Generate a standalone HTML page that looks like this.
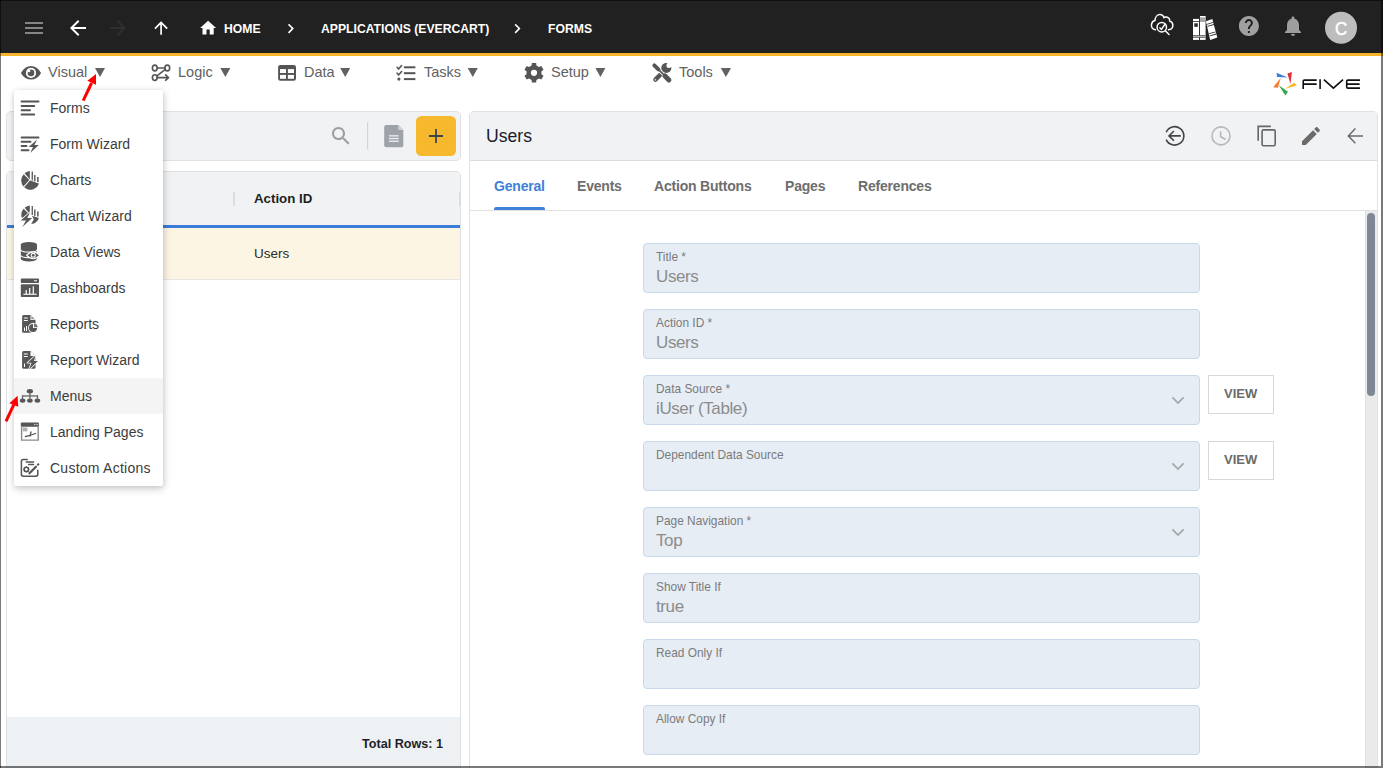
<!DOCTYPE html>
<html><head><meta charset="utf-8">
<style>
*{box-sizing:border-box;margin:0;padding:0}
html,body{width:1383px;height:768px;overflow:hidden;background:#fff;font-family:"Liberation Sans",sans-serif}
.a{position:absolute}
.t{position:absolute;white-space:nowrap;line-height:1}
svg{position:absolute;overflow:visible}
#top{left:0;top:0;width:1383px;height:53px;background:#212121}
#yl{left:0;top:53px;width:1383px;height:3px;background:#f6b42a}
.bc{color:#fff;font-weight:700;font-size:12.2px}
.nav{color:#616161;font-size:14.5px}
.tri{color:#616161;font-size:11px}
.panel{border:1px solid #dfe1e5;border-radius:5px;background:#fff}
.hdr{background:#f1f2f4}
.mi{color:#3c3c3c;font-size:14px}
.tab{font-weight:700;font-size:14px;letter-spacing:-0.2px;color:#6e6e6e}
.fld{position:absolute;left:643px;width:557px;height:50px;background:#e6edf5;border:1px solid #c8d8ea;border-radius:4px}
.lbl{position:absolute;left:12px;top:7.5px;font-size:11.9px;color:#7b7b7b;white-space:nowrap;line-height:1}
.val{position:absolute;left:12px;top:24px;font-size:17px;letter-spacing:-0.4px;color:#8c8c8c;white-space:nowrap;line-height:1}
.btn{position:absolute;left:1208px;width:66px;height:39px;border:1px solid #d8d8d8;background:#fff}
.btn span{position:absolute;left:15px;top:10.5px;font-size:13px;font-weight:700;color:#6b6b6b;line-height:1}
</style></head><body>
<!-- top bar -->
<div id="top" class="a"></div>
<div id="yl" class="a"></div>
<div class="t bc" style="left:224px;top:23px">HOME</div>
<div class="t bc" style="left:321px;top:23px">APPLICATIONS (EVERCART)</div>
<div class="t bc" style="left:548px;top:23px">FORMS</div>

<!-- nav -->
<div class="t nav" style="left:48px;top:65px">Visual</div>
<div class="t nav" style="left:178px;top:65px">Logic</div>
<div class="t nav" style="left:304px;top:65px">Data</div>
<div class="t nav" style="left:424px;top:65px">Tasks</div>
<div class="t nav" style="left:551px;top:65px">Setup</div>
<div class="t nav" style="left:679px;top:65px">Tools</div>

<!-- left toolbar panel -->
<div class="a panel hdr" style="left:6px;top:111px;width:455px;height:50px"></div>
<!-- table panel -->
<div class="a panel" style="left:6px;top:171px;width:455px;height:610px;overflow:hidden">
  <div class="a hdr" style="left:0;top:0;width:455px;height:53px"></div>
  <div class="a" style="left:0;top:53px;width:455px;height:3px;background:#3b7dd8"></div>
  <div class="a" style="left:0;top:56px;width:455px;height:52px;background:#fdf5e4;border-bottom:1px solid #e6e6e6"></div>
  <div class="a" style="left:0;top:545px;width:455px;height:60px;background:#eef1f3"></div>
</div>
<div class="a" style="left:233px;top:192px;width:2px;height:14px;background:#dadcdf"></div>
<div class="a" style="left:458.5px;top:192px;width:2px;height:14px;background:#dadcdf"></div>
<div class="t" style="left:254px;top:191.5px;font-size:13.3px;font-weight:700;color:#1e1e1e">Action ID</div>
<div class="t" style="left:254px;top:246.5px;font-size:13.5px;color:#2a2a2a">Users</div>
<div class="t" style="left:362px;top:737.5px;font-size:12.6px;font-weight:700;color:#1e1e2a">Total Rows: 1</div>

<!-- right panel -->
<div class="a panel" style="left:469px;top:111px;width:909px;height:680px;overflow:hidden">
  <div class="a hdr" style="left:0;top:0;width:909px;height:49px;border-bottom:1px solid #dcdcdc"></div>
  <div class="a" style="left:0;top:49px;width:909px;height:50px;border-bottom:1px solid #e0e0e0"></div>
</div>
<div class="t" style="left:486px;top:127.5px;font-size:17.6px;color:#1a1d2b">Users</div>
<div class="t tab" style="left:494px;top:178.5px;color:#3f80d8">General</div>
<div class="a" style="left:494px;top:207px;width:51px;height:3px;background:#3f80d8;border-radius:2px 2px 0 0"></div>
<div class="t tab" style="left:577px;top:178.5px">Events</div>
<div class="t tab" style="left:654px;top:178.5px">Action Buttons</div>
<div class="t tab" style="left:785px;top:178.5px">Pages</div>
<div class="t tab" style="left:858px;top:178.5px">References</div>

<!-- fields -->
<div class="fld" style="top:243px"><div class="lbl">Title *</div><div class="val">Users</div></div>
<div class="fld" style="top:309px"><div class="lbl">Action ID *</div><div class="val">Users</div></div>
<div class="fld" style="top:375px"><div class="lbl">Data Source *</div><div class="val">iUser (Table)</div></div>
<div class="fld" style="top:441px"><div class="lbl">Dependent Data Source</div></div>
<div class="fld" style="top:507px"><div class="lbl">Page Navigation *</div><div class="val">Top</div></div>
<div class="fld" style="top:573px"><div class="lbl">Show Title If</div><div class="val">true</div></div>
<div class="fld" style="top:639px"><div class="lbl">Read Only If</div></div>
<div class="fld" style="top:705px"><div class="lbl">Allow Copy If</div></div>
<div class="btn" style="top:375px"><span>VIEW</span></div>
<div class="btn" style="top:441px"><span>VIEW</span></div>

<!-- scrollbar -->
<div class="a" style="left:1365px;top:211px;width:12px;height:560px;background:#eaeaea;border-left:1px solid #e0e0e0"></div>
<div class="a" style="left:1367px;top:213px;width:8px;height:183px;background:#7f8696;border-radius:4px"></div>

<svg class="a" style="left:0;top:0" width="1383" height="768" viewBox="0 0 1383 768">
<!-- FIVE logo -->
<path d="M1276.6 72.8 L1277 77 L1287.8 77.4Z" fill="#3d7fdc"/>
<path d="M1287.4 73.6 L1291.9 72 L1290.5 83.9Z" fill="#e0333a"/>
<path d="M1285.2 88.7 L1294 82.8 L1297 85.4Z" fill="#f6b929"/>
<path d="M1278.8 85.2 L1288 91.7 L1285.3 95.4Z" fill="#34a853"/>
<path d="M1280.7 77.9 L1273.2 87.3 L1277.9 87.8Z" fill="#f97c2c"/>
<g fill="none" stroke="#111" stroke-width="1.6">
<path d="M1303.2 88.9 V81.3 Q1303.2 80.1 1304.4 80.1 H1316.7 M1303.2 84.1 H1316.7"/>
<path d="M1320.1 79.3 V88.9"/>
<path d="M1323.9 79.6 L1333.4 88.2 L1343 79.6"/>
<path d="M1360 80.1 H1348 Q1346.7 80.1 1346.7 81.3 V86.9 Q1346.7 88.1 1348 88.1 H1360 M1346.7 84.1 H1359.6"/>
</g>
<!-- toolbar -->
<g transform="translate(329,124)" fill="#9a9da2"><path d="M15.5 14h-.79l-.28-.27C15.41 12.59 16 11.11 16 9.5 16 5.91 13.09 3 9.5 3S3 5.91 3 9.5 5.91 16 9.5 16c1.61 0 3.09-.59 4.23-1.57l.27.28v.79l5 4.99L20.49 19l-4.99-5zm-6 0C7.01 14 5 11.99 5 9.5S7.01 5 9.5 5 14 7.01 14 9.5 11.99 14 9.5 14z"/></g>
<rect x="367" y="122" width="1.2" height="27.5" fill="#d3d5d8"/>
<path d="M386.2 124.9 H398.5 L403.3 129.7 V145.2 Q403.3 147.2 401.3 147.2 H386.2 Q384.2 147.2 384.2 145.2 V126.9 Q384.2 124.9 386.2 124.9Z" fill="#9ea3aa"/>
<path d="M398.5 124.9 V129.7 H403.3Z" fill="#f1f2f4"/>
<path d="M398.8 125.3 L398.8 129.4 L402.9 129.4Z" fill="#c9ccd0"/>
<g fill="#eef0f2"><rect x="388.9" y="135.2" width="9.8" height="1.3"/><rect x="388.9" y="137.9" width="9.8" height="1.3"/><rect x="388.9" y="140.6" width="9.8" height="1.3"/></g>
<rect x="416" y="116" width="40" height="40" rx="5.5" fill="#f6b82c"/>
<path d="M436 129 V143 M429 136 H443" stroke="#3e4452" stroke-width="1.8"/>
<!-- right header icons -->
<g fill="none" stroke="#444" stroke-width="1.6">
<path d="M1166.2 132.2 A9.2 9.2 0 1 1 1166.2 139.6"/>
<path d="M1180.8 135.9 H1169 M1173.9 131 L1169 135.9 L1173.9 140.8"/>
</g>
<g fill="none" stroke="#b8b8b8" stroke-width="1.6">
<circle cx="1221" cy="135.9" r="9"/>
<path d="M1220.6 131.2 V136.5 L1225.6 139.5"/>
</g>
<g fill="none" stroke="#666" stroke-width="1.6">
<path d="M1258.2 140.8 V126.4 H1270.8"/>
<rect x="1262.1" y="129.9" width="13.1" height="15.8" rx="1.4"/>
</g>
<g transform="translate(1299,124)" fill="#6b6b6b"><path d="M3 17.25V21h3.75L17.81 9.94l-3.75-3.75L3 17.25zM20.71 7.04c.39-.39.39-1.02 0-1.41l-2.34-2.34c-.39-.39-1.02-.39-1.41 0l-1.83 1.83 3.75 3.75 1.83-1.83z"/></g>
<g fill="none" stroke="#6b6b6b" stroke-width="1.5">
<path d="M1363 135.9 H1348.5 M1355.4 128.6 L1348.3 135.9 L1355.4 143.2"/>
</g>
<!-- select chevrons -->
<g fill="none" stroke="#a6a6a6" stroke-width="1.7">
<path d="M1172.4 397.3 L1178 403 L1183.6 397.3"/>
<path d="M1172.4 463.3 L1178 469 L1183.6 463.3"/>
<path d="M1172.4 529.3 L1178 535 L1183.6 529.3"/>
</g>
</svg>

<!-- dropdown menu -->
<div class="a" style="left:14px;top:90px;width:149px;height:396px;background:#fff;border-radius:2px;box-shadow:0 4px 8px rgba(0,0,0,.11),0 1px 4px rgba(0,0,0,.1),2px 1px 9px rgba(0,0,0,.08)">
  <div class="a" style="left:0;top:288px;width:149px;height:36px;background:#f4f4f4"></div>
</div>
<div class="t mi" style="left:50px;top:101px">Forms</div>
<div class="t mi" style="left:50px;top:137px">Form Wizard</div>
<div class="t mi" style="left:50px;top:173px">Charts</div>
<div class="t mi" style="left:50px;top:209px">Chart Wizard</div>
<div class="t mi" style="left:50px;top:245px">Data Views</div>
<div class="t mi" style="left:50px;top:281px">Dashboards</div>
<div class="t mi" style="left:50px;top:317px">Reports</div>
<div class="t mi" style="left:50px;top:353px">Report Wizard</div>
<div class="t mi" style="left:50px;top:389px">Menus</div>
<div class="t mi" style="left:50px;top:425px">Landing Pages</div>
<div class="t mi" style="left:50px;top:461px;letter-spacing:.25px">Custom Actions</div>

<svg class="a" style="left:0;top:0" width="1383" height="768" viewBox="0 0 1383 768">
<!-- hamburger -->
<g transform="translate(22,16)" fill="#868686"><path d="M3 18h18v-2H3v2zm0-5h18v-2H3v2zm0-7v2h18V6H3z"/></g>
<!-- back -->
<g transform="translate(66,16)" fill="#fff"><path d="M20 11H7.83l5.59-5.59L12 4l-8 8 8 8 1.41-1.41L7.83 13H20v-2z"/></g>
<!-- forward (disabled) -->
<g transform="translate(106,16)" fill="#2f2f2f"><path d="M12 4l-1.41 1.41L16.17 11H4v2h12.17l-5.58 5.59L12 20l8-8z"/></g>
<!-- up -->
<g transform="translate(151,18) scale(0.84)" fill="#fff"><path d="M4 12l1.41 1.41L11 7.83V20h2V7.83l5.58 5.59L20 12l-8-8-8 8z"/></g>
<!-- home -->
<g transform="translate(198.5,18.4) scale(0.8)" fill="#fff"><path d="M10 20v-6h4v6h5v-8h3L12 3 2 12h3v8z"/></g>
<!-- chevrons -->
<g transform="translate(281.1,19) scale(0.8)" fill="#fff"><path d="M10 6L8.59 7.41 13.17 12l-4.58 4.59L10 18l6-6z"/></g>
<g transform="translate(507.7,19) scale(0.8)" fill="#fff"><path d="M10 6L8.59 7.41 13.17 12l-4.58 4.59L10 18l6-6z"/></g>
<!-- cloud search -->
<g fill="none" stroke="#fff" stroke-width="1.5" stroke-linecap="round">
<path d="M1155.4 29.8 C1152.3 29.4 1151 27 1151.5 24.3 C1151.9 22 1153.5 20.6 1155 20.4 C1155.2 16.8 1157.4 14.6 1159.9 14.6 C1161.9 14.6 1163.4 15.8 1164 17.6 C1164.8 17 1165.8 16.8 1166.6 17 C1168.8 17.5 1169.8 19.2 1169.7 21 C1171.8 21.8 1173 23.8 1172.8 26 C1172.5 28.3 1170.6 29.6 1168.4 29.8"/>
<circle cx="1161.8" cy="27.2" r="4.7"/>
<path d="M1160 27.9 L1161.4 29.4 L1164.6 24.8"/>
<path d="M1165.3 30.8 L1169 34.5"/>
</g>
<!-- books -->
<g fill="#fff">
<rect x="1193" y="18.9" width="6.2" height="21"/>
<rect x="1200" y="16" width="5.6" height="23.9"/>
<path d="M1205.9 21.2 L1212.3 19.1 L1217.3 37.5 L1210.2 39.9Z"/>
</g>
<g fill="#2a2a2a">
<rect x="1193" y="21.2" width="6.2" height="0.8"/>
<rect x="1194.3" y="23.3" width="3.5" height="3.5"/>
<rect x="1193" y="35.1" width="12.6" height="0.7"/>
<rect x="1193" y="37.3" width="12.6" height="0.7"/>
<rect x="1199.2" y="16" width="0.8" height="24"/>
<rect x="1200" y="20.6" width="5.6" height="0.8"/>
<path d="M1206.7 23.9 L1213.2 22 L1213.4 22.8 L1206.9 24.7Z"/>
<path d="M1207.3 26 L1213.8 24.1 L1214 24.9 L1207.5 26.8Z"/>
<path d="M1209 33.3 L1215.6 31.4 L1215.8 32.2 L1209.2 34.1Z"/>
<path d="M1209.6 35.5 L1216.2 33.6 L1216.4 34.4 L1209.8 36.3Z"/>
</g>
<rect x="1200" y="17.3" width="5.6" height="3.1" fill="#a8a8a8"/>
<rect x="1193" y="35.8" width="12.6" height="1.5" fill="#b0b0b0"/>
<!-- help -->
<g transform="translate(1236.9,14)" fill="#a0a0a0"><path d="M12 2C6.48 2 2 6.48 2 12s4.48 10 10 10 10-4.48 10-10S17.52 2 12 2zm1 17h-2v-2h2v2zm2.07-7.750l-.9.92C13.45 12.9 13 13.5 13 15h-2v-.5c0-1.1.45-2.1 1.17-2.830l1.24-1.26c.37-.36.59-.86.59-1.41 0-1.1-.9-2-2-2s-2 .9-2 2H8c0-2.21 1.79-4 4-4s4 1.79 4 4c0 .88-.36 1.68-.93 2.25z"/></g>
<!-- bell -->
<g transform="translate(1281,14)" fill="#9e9e9e"><path d="M12 22c1.1 0 2-.9 2-2h-4c0 1.1.89 2 2 2zm6-6v-5c0-3.07-1.64-5.64-4.5-6.32V4c0-.83-.67-1.5-1.5-1.5s-1.5.67-1.5 1.5v.68C7.63 5.36 6 7.92 6 11v5l-2 2v1h16v-1l-2-2z"/></g>
<!-- avatar -->
<circle cx="1341" cy="27.8" r="16" fill="#bdbdbd"/>
<text transform="translate(1341,34.8) scale(0.9,1)" x="0" y="0" text-anchor="middle" font-family="Liberation Sans" font-size="18.8" fill="#fff" stroke="#fff" stroke-width="0.45">C</text>

<!-- nav icons -->
<g fill="#555">
<!-- eye -->
<path d="M20.9 72.9 C23.5 68.5 27 66.1 31 66.1 C35 66.1 38.5 68.5 41.1 72.9 C38.5 77.3 35 79.6 31 79.6 C27 79.6 23.5 77.3 20.9 72.9Z"/>
<circle cx="31" cy="72.9" r="5.1" fill="#fff"/>
<circle cx="31" cy="72.9" r="3.3"/>
<circle cx="29" cy="71" r="1.35" fill="#fff"/>
<!-- data table -->
<rect x="278.1" y="65.1" width="17.9" height="15.6" rx="2.2"/>
<rect x="280" y="69.1" width="6" height="3.9" fill="#fff"/>
<rect x="287.9" y="69.1" width="6.1" height="3.9" fill="#fff"/>
<rect x="280" y="74.9" width="6" height="3.9" fill="#fff"/>
<rect x="287.9" y="74.9" width="6.1" height="3.9" fill="#fff"/>
<!-- gear -->
<path fill-rule="evenodd" d="M531.61 65.59 L531.82 63.04 L536.18 63.04 L536.39 65.59 L539.05 67.12 L541.36 66.03 L543.54 69.81 L541.44 71.26 L541.44 74.34 L543.54 75.79 L541.36 79.57 L539.05 78.48 L536.39 80.01 L536.18 82.56 L531.82 82.56 L531.61 80.01 L528.95 78.48 L526.64 79.57 L524.46 75.79 L526.56 74.34 L526.56 71.26 L524.46 69.81 L526.64 66.03 L528.95 67.12Z M537.1 72.8 A3.1 3.1 0 1 0 530.9 72.8 A3.1 3.1 0 1 0 537.1 72.8Z"/>
<!-- tasks -->
<rect x="403.9" y="66.3" width="11.5" height="2"/>
<rect x="403.9" y="72.2" width="11.5" height="2"/>
<rect x="403.9" y="78.1" width="11.5" height="2"/>
<circle cx="398.9" cy="79.1" r="1.6"/>
</g>
<g fill="none" stroke="#555" stroke-width="1.6" stroke-linecap="round" stroke-linejoin="round">
<path d="M397.1 67.3 L398.6 69.1 L401.6 65.6"/>
<path d="M397.1 73.2 L398.6 75 L401.6 71.5"/>
<!-- logic -->
<ellipse cx="154.8" cy="68" rx="2.4" ry="2.9"/>
<ellipse cx="167.3" cy="68" rx="2.4" ry="2.9"/>
<ellipse cx="154.8" cy="77.6" rx="2.4" ry="2.9"/>
<path d="M157.2 68 H164.9 M165 69.6 L157 75.8 M157.2 77.6 H168.5 M165.6 74.9 L168.5 77.6 L165.6 80.3"/>
</g>
<!-- tools -->
<g stroke-linecap="round">
<path d="M661.8 73.2 L655.4 79.6" stroke="#555" stroke-width="4.4"/>
<circle cx="666.3" cy="68" r="5.1" fill="#555"/>
<circle cx="668.9" cy="65.4" r="2.5" fill="#fff"/>
<path d="M667.1 63.6 L670.7 67.2 L675 62.9 L671.4 59.3Z" fill="#fff"/>
<circle cx="655.3" cy="79.8" r="0.95" fill="#c0c0c0"/>
<path d="M658.6 69.6 L665 76" stroke="#fff" stroke-width="3.6"/>
<path d="M654.3 65.3 L658.4 69.4" stroke="#555" stroke-width="3.9"/>
<path d="M658.4 69.4 L664.4 75.4" stroke="#555" stroke-width="1.7"/>
<path d="M665 76 L668.9 79.9" stroke="#555" stroke-width="5"/>
</g>
<!-- triangles -->
<g fill="#616161">
<path d="M95 68.1 H105 L100 77Z"/>
<path d="M220.3 68.1 H230.4 L225.35 77Z"/>
<path d="M340.2 68.1 H350.2 L345.2 77Z"/>
<path d="M467.7 68.1 H477.8 L472.75 77Z"/>
<path d="M595.4 68.1 H605.4 L600.4 77Z"/>
<path d="M720.8 68.1 H731 L725.9 77Z"/>
</g>
</svg>

<svg class="a" style="left:0;top:0" width="1383" height="768" viewBox="0 0 1383 768">
<g fill="none" stroke="#555" stroke-width="2" stroke-linecap="round">
<!-- forms -->
<path d="M21.6 101.5 H38.5 M21.6 105.9 H34.2 M21.6 110.2 H30 M21.6 114.5 H34.2"/>
<!-- form wizard -->
<path d="M21.6 137.4 H38.5 M21.6 141.7 H30.5 M21.6 146 H26.5 M21.6 150.3 H28.5"/>
</g>
<g fill="#575757">
<path d="M37.2 139.6 L28.6 147 L33 147 L30.2 153 L38.8 145 L34.4 145Z" fill="#fff" stroke="#fff" stroke-width="1.4" stroke-linejoin="round"/><path d="M37.2 139.6 L28.6 147 L33 147 L30.2 153 L38.8 145 L34.4 145Z"/>
<!-- charts -->
<path d="M30 180.6 L38.9 183.4 A9 9 0 0 1 24.2 187.3Z"/>
<path d="M29.3 180 L23.4 186.4 A9 9 0 0 1 23.7 174.3Z"/>
<path d="M29.8 179.4 L24.7 173.3 A9 9 0 0 1 29.8 171Z"/>
<rect x="31.6" y="171.5" width="1.3" height="9"/>
<rect x="34.1" y="175" width="1.4" height="6.4"/>
<rect x="37.1" y="177" width="1.5" height="5"/>
<g transform="translate(0,-1.5)"><!-- chart wizard -->
<path d="M29.8 215.4 L24.7 209.3 A9 9 0 0 1 29.8 207Z"/>
<path d="M28.6 215.2 L22 219.6 A9 9 0 0 1 23.7 210.3Z"/>
<path d="M32 217.2 L38.9 219.4 A9 9 0 0 1 31.2 225.6 L33.8 221Z"/>
<rect x="31.6" y="207.5" width="1.3" height="9"/>
<rect x="34.1" y="211" width="1.4" height="6.4"/>
<rect x="37.1" y="213" width="1.5" height="5"/>
<path d="M30.2 213.6 L20.8 222 L26 222 L22.4 228.6 L32.2 219.6 L27.2 219.6Z" fill="#fff" stroke="#fff" stroke-width="1.6" stroke-linejoin="round"/><path d="M30.2 213.6 L20.8 222 L26 222 L22.4 228.6 L32.2 219.6 L27.2 219.6Z"/>
</g>
<!-- data views -->
<path d="M20.8 244.6 A8.1 2.6 0 0 1 37 244.6 V258.8 A8.1 2.6 0 0 1 20.8 258.8Z"/>
<path d="M20.6 249.4 A8.3 2.6 0 0 0 37.2 249.4 M20.6 255 A8.3 2.6 0 0 0 37.2 255" fill="none" stroke="#fff" stroke-width="1.1"/>
<path d="M25.8 255.3 Q33.2 247.3 40.6 255.3 Q33.2 263.3 25.8 255.3Z" fill="#fff"/>
<path d="M27.5 255.3 Q33.2 249.5 38.9 255.3 Q33.2 261.1 27.5 255.3Z"/>
<circle cx="33.2" cy="255.3" r="2.5" fill="#fff"/>
<circle cx="33.2" cy="255.3" r="1.4"/>
<!-- dashboards -->
<rect x="20.8" y="278.6" width="18.2" height="4.4" rx="0.8"/>
<rect x="34" y="280.3" width="3" height="1" fill="#fff"/>
<rect x="20.8" y="284.2" width="18.2" height="12.8" rx="0.8"/>
<g fill="#fff"><rect x="23.4" y="293.7" width="13.3" height="1.1"/><rect x="25.6" y="290" width="1.2" height="4"/><rect x="29.1" y="288" width="1.2" height="6"/><rect x="32.7" y="286.3" width="1.2" height="7.7"/></g>
<!-- reports -->
<path d="M23.6 315 H30.5 L35.5 320 V331.2 Q35.5 332.7 34 332.7 H23.6 Q22.1 332.7 22.1 331.2 V316.5 Q22.1 315 23.6 315Z"/>
<path d="M30.5 315 V320 H35.5Z" fill="#fff"/>
<path d="M31.3 315.8 V319.2 H34.7Z" fill="#999"/>
<g fill="#fff"><rect x="23.8" y="317.5" width="4" height="1"/><rect x="23.8" y="320" width="4" height="1"/><rect x="24" y="327.5" width="1" height="3.5"/><rect x="26" y="326" width="1" height="5"/></g>
<circle cx="33.4" cy="328" r="5.3" fill="#fff"/>
<path d="M33 324 A4 4 0 1 0 37 328 H33Z"/>
<path d="M34 323.5 A4 4 0 0 1 37.7 327.2 H34Z" fill="#777"/>
<!-- report wizard -->
<path d="M23.6 351 H30.5 L35.5 356 V367.2 Q35.5 368.7 34 368.7 H23.6 Q22.1 368.7 22.1 367.2 V352.5 Q22.1 351 23.6 351Z"/>
<path d="M30.5 351 V356 H35.5Z" fill="#fff"/>
<g fill="#fff"><rect x="23.8" y="353.5" width="4" height="1"/><rect x="23.8" y="356" width="4" height="1"/><rect x="24" y="363.5" width="1" height="3.5"/></g>
<path d="M35.5 355.5 L27.5 362.8 L31.5 362.8 L29 369.5 L38 361 L34 361Z" fill="#fff" stroke="#fff" stroke-width="1.6" stroke-linejoin="round"/><path d="M35.5 355.5 L27.5 362.8 L31.5 362.8 L29 369.5 L38 361 L34 361Z"/>
<!-- menus -->
<ellipse cx="29.9" cy="391.3" rx="3.1" ry="2.2"/>
<ellipse cx="22.6" cy="400.6" rx="2.8" ry="2.2"/>
<ellipse cx="29.9" cy="400.6" rx="2.8" ry="2.2"/>
<ellipse cx="37.4" cy="400.6" rx="2.8" ry="2.2"/>
<rect x="22.1" y="395.3" width="15.8" height="1.3" fill="#666"/>
<rect x="29.3" y="392" width="1.3" height="8" fill="#666"/>
<rect x="21.9" y="395.3" width="1.3" height="4.5" fill="#666"/>
<rect x="36.8" y="395.3" width="1.3" height="4.5" fill="#666"/>
<!-- landing pages -->
<rect x="20.8" y="422.6" width="18.2" height="4.2" rx="1"/>
<g fill="#ccc"><rect x="34" y="423.9" width="1" height="1.2"/><rect x="35.6" y="423.9" width="1" height="1.2"/><rect x="37.2" y="423.9" width="1" height="1.2"/></g>
<rect x="22.6" y="425.2" width="1" height="1"/>
<path d="M21.6 426.6 V440.1 H38.2 V426.6" fill="none" stroke="#8a8a8a" stroke-width="1.4"/>
<rect x="22.8" y="427.6" width="4.6" height="3.8" fill="#b0b0b0"/>
<path d="M25.5 436.5 Q30.5 435.5 35.5 433.5 M31 432 L30 436" fill="none" stroke="#555" stroke-width="1.3" stroke-linecap="round"/>
</g>
<!-- custom actions -->
<g fill="none" stroke="#555" stroke-width="1.5" stroke-linecap="round">
<path d="M27.2 459.6 H23.2 Q21.4 459.6 21.4 461.4 V474.3 Q21.4 476.2 23.2 476.2 H36 Q37.8 476.2 37.8 474.3 V470.2"/>
<path d="M26.2 462.1 H33.5 M28.6 464.4 H33.5"/>
<path d="M29.4 473.3 L36 466.7" stroke-width="2.3"/>
<circle cx="26.3" cy="469.4" r="2.1"/>
</g>
<g fill="#555"><path d="M36.6 464.6 L38.3 463 L39.6 464.3 L38 466Z"/></g>
<g stroke="#555" stroke-width="1.1">
<path d="M26.3 466.2 V467.1 M26.3 471.7 V472.6 M23.1 469.4 H24 M28.6 469.4 H29.5 M24 467.1 L24.6 467.7 M28 471.1 L28.6 471.7 M28.6 467.1 L28 467.7 M24.6 471.1 L24 471.7"/>
</g>
<!-- red annotation arrows -->
<g fill="#ff0000">
<path d="M96 74 L87.3 80.8 L96 84.8Z"/>
<path d="M17.6 395.8 L9.4 403.2 L18.2 406.7Z"/>
</g>
<g stroke="#ff0000" stroke-width="3" fill="none">
<path d="M83.2 100.6 L91.6 83"/>
<path d="M6 421.4 L13.8 404.6"/>
</g>
</svg>

<!-- window frame -->
<div class="a" style="left:0;top:0;width:1383px;height:1px;background:rgba(0,0,0,.5)"></div>
<div class="a" style="left:0;top:0;width:1px;height:768px;background:rgba(0,0,0,.52)"></div>
<div class="a" style="left:1381px;top:0;width:2px;height:768px;background:rgba(0,0,0,.52)"></div>
<div class="a" style="left:0;top:766px;width:1381px;height:2px;background:rgba(0,0,0,.52)"></div>
</body></html>
